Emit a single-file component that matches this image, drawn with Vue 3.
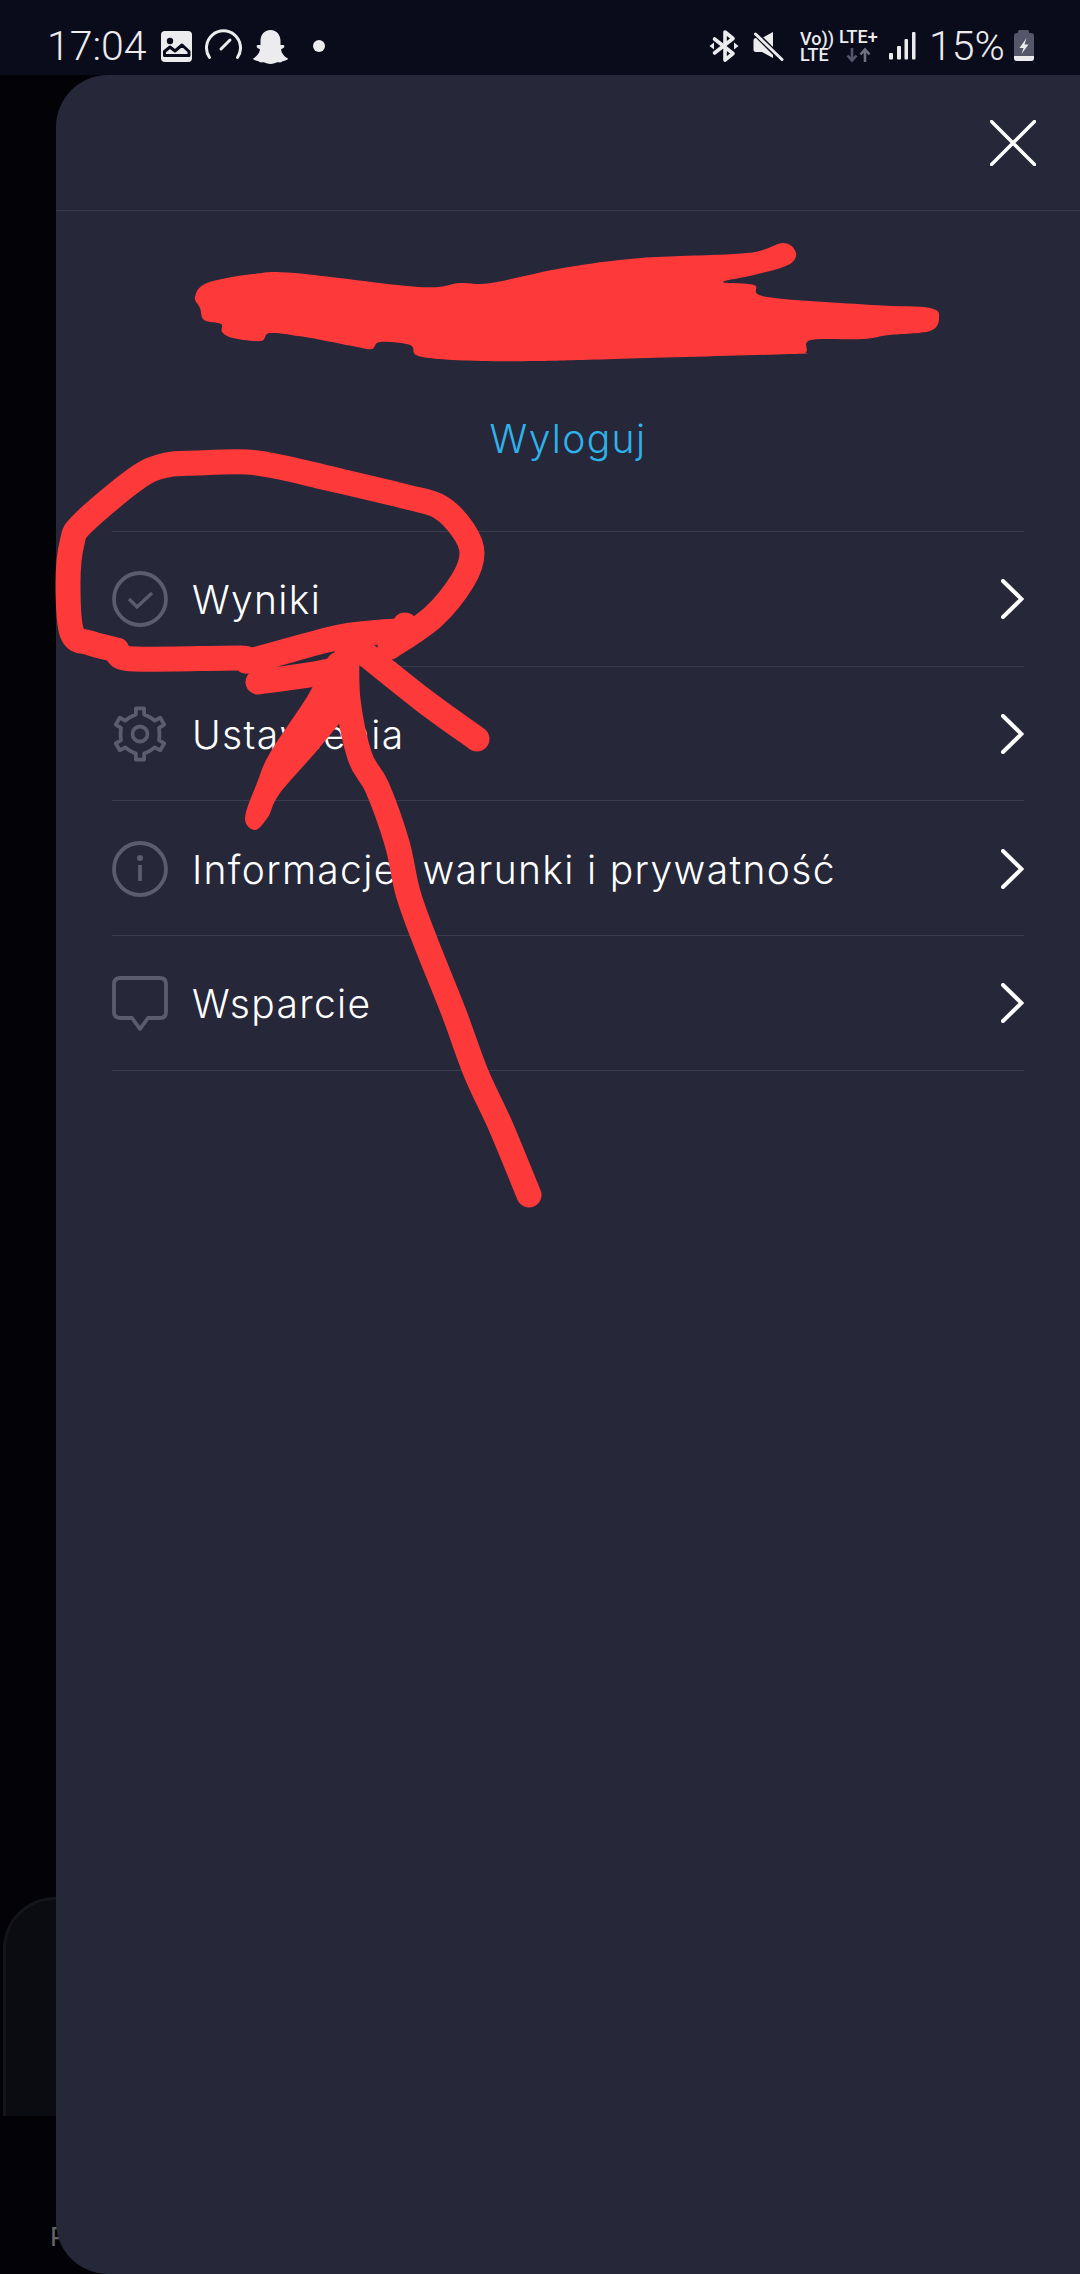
<script setup>
const rows = [
  { icon: 'check', label: 'Wyniki' },
  { icon: 'gear', label: 'Ustawienia' },
  { icon: 'info', label: 'Informacje, warunki i prywatność' },
  { icon: 'chat', label: 'Wsparcie' },
]

const gearPoints = Array.from({ length: 6 }, (_, i) => {
  const a = -90 + i * 60
  return [[a - 24, 19.5], [a - 12, 20], [a - 9, 26], [a + 9, 26], [a + 12, 20], [a + 24, 19.5]]
    .map(([deg, r]) => {
      const t = (deg * Math.PI) / 180
      return `${(28 + r * Math.cos(t)).toFixed(2)},${(28 + r * Math.sin(t)).toFixed(2)}`
    })
    .join(' ')
}).join(' ')

// Smooth a hand-drawn marker line through its sample points (Catmull-Rom).
function smooth(points, closed = false) {
  const n = points.length
  const at = (i) => (closed ? points[(i + n) % n] : points[Math.max(0, Math.min(n - 1, i))])
  let d = `M${points[0][0]} ${points[0][1]}`
  const end = closed ? n : n - 1
  for (let i = 0; i < end; i++) {
    const [p0, p1, p2, p3] = [at(i - 1), at(i), at(i + 1), at(i + 2)]
    const c1 = [p1[0] + (p2[0] - p0[0]) / 6, p1[1] + (p2[1] - p0[1]) / 6]
    const c2 = [p2[0] - (p3[0] - p1[0]) / 6, p2[1] - (p3[1] - p1[1]) / 6]
    d += ` C${c1[0].toFixed(1)} ${c1[1].toFixed(1)} ${c2[0].toFixed(1)} ${c2[1].toFixed(1)} ${p2[0]} ${p2[1]}`
  }
  return closed ? d + ' Z' : d
}

const blob = smooth([
  [195, 297], [207, 283], [253, 274], [295, 273], [419, 287], [460, 283], [491, 283], [563, 268], [641, 258],
  [747, 253], [783, 243], [796, 253], [788, 265], [754, 275], [723, 282], [754, 285], [767, 297], [873, 305],
  [930, 308], [939, 318], [930, 331], [889, 335], [863, 339], [811, 340], [806, 352], [790, 354], [615, 359],
  [537, 361], [481, 361], [439, 359], [416, 355], [410, 345], [380, 342], [372, 349], [357, 347], [305, 337],
  [270, 333], [261, 341], [233, 338], [222, 332], [221, 324], [204, 320], [200, 308],
], true)

const arrowArm = smooth([
  [333, 653], [307, 697], [270, 753], [257, 783], [245, 818], [255, 830], [268, 817], [280, 793], [320, 747], [350, 707], [357, 673],
], true)

const pens = [
  [[117, 650], [90, 643], [72, 633], [68, 583], [72, 543], [83, 523], [137, 478], [167, 465], [197, 463], [247, 462], [280, 467], [323, 477], [407, 497], [440, 507], [463, 530], [472, 553], [463, 580], [433, 617], [390, 647]],
  [[117, 653], [135, 659], [240, 658], [253, 660], [340, 637], [403, 630], [405, 625]],
  [[258, 682], [333, 670], [352, 652]],
  [[358, 648], [423, 700], [477, 739]],
  [[347, 650], [348, 700], [360, 757], [377, 787], [397, 843], [408, 893], [426, 943], [454, 1013], [476, 1073], [501, 1127], [529, 1195]],
].map((p) => smooth(p))
</script>

<template>
  <div class="screen">
    <div class="backdrop" aria-hidden="true">
      <div class="ghost-card"></div>
      <span class="ghost-letter">P</span>
    </div>

    <header class="status">
      <span class="time">17:04</span>
      <svg class="si s-image" viewBox="161 28 31 36">
        <rect x="161" y="31" width="31" height="31" rx="4" fill="#ececee" />
        <circle cx="170" cy="41" r="3.2" fill="#0a0c1c" />
        <path d="M164.500 55.500 V51.500 L170 47 L175 51 L182 45 L189 51.500 V55.500 Z" fill="#ececee" stroke="#0a0c1c" stroke-width="3" stroke-linejoin="round" />
      </svg>
      <svg class="si s-gauge" viewBox="205 28 37 36">
        <path d="M209.500 57.500 A17 17 0 1 1 237.500 57.500" fill="none" stroke="#ececee" stroke-width="3" stroke-linecap="round" />
        <path d="M221 49 L230 40" fill="none" stroke="#ececee" stroke-width="3" stroke-linecap="round" />
      </svg>
      <svg class="si s-snap" viewBox="253 28 35 36">
        <path d="M270.500 30 C264 30 260.500 35 260.500 41 V45 C259 45 257 44.500 256.500 46 C256.500 48 259 48.500 260 49.500 C259.500 53 256.500 57 253 58.500 C253.500 60.500 257 60.500 259 61.500 C260 63 262 62 264.500 62.500 C266.500 63 268 64 270.500 64 C273 64 274.500 63 276.500 62.500 C279 62 281 63 282 61.500 C284 60.500 287.500 60.500 288 58.500 C284.500 57 281.500 53 281 49.500 C282 48.500 284.500 48 284.500 46 C284 44.500 282 45 280.500 45 V41 C280.500 35 277 30 270.500 30 Z" fill="#ececee" />
      </svg>
      <span class="notif-dot"></span>

      <div class="status-right">
        <svg class="si s-bt" viewBox="709 28 31 36">
          <path d="M714.500 39 L733 53.500 L725 60 V32 L733 38.500 L714.500 53" fill="none" stroke="#ececee" stroke-width="3.600" stroke-linejoin="round" stroke-linecap="round" />
          <path d="M709.500 46 L714 42.500 V49.500 Z M738.500 46 L734 42.500 V49.500 Z" fill="#ececee" />
        </svg>
        <svg class="si s-mute" viewBox="751 28 34 36">
          <path d="M756 38 H762 L773 32 V58 L762 52 H756 Q753.500 52 753.500 49.500 V40.500 Q753.500 38 756 38 Z" fill="#ececee" />
          <path d="M752 30 L784 62" stroke="#0a0c1c" stroke-width="5.500" />
          <path d="M755.500 34 L782 59.500" stroke="#ececee" stroke-width="3" stroke-linecap="round" />
        </svg>
        <div class="net net-vo"><span>Vo))</span><span>LTE</span></div>
        <div class="net net-lte">
          <span>LTE+</span>
          <svg viewBox="0 0 26 16" class="arrows">
            <path d="M7 1 V13 M2.500 8.500 L7 13.500 L11.500 8.500" fill="none" stroke="#55566a" stroke-width="2.600" />
            <path d="M20 15 V3 M15.500 7.500 L20 2.500 L24.500 7.500" fill="none" stroke="#70717f" stroke-width="2.600" />
          </svg>
        </div>
        <svg class="si s-signal" viewBox="888 28 27 36">
          <rect x="888" y="53" width="4" height="6.500" rx="1" fill="#ececee" />
          <rect x="896" y="46" width="4" height="13.500" rx="1" fill="#ececee" />
          <rect x="903.500" y="39" width="3.500" height="20.500" rx="1" fill="#ececee" />
          <rect x="911" y="32" width="3.500" height="27.500" rx="1" fill="#ececee" />
        </svg>
        <span class="percent">15%</span>
        <svg class="si s-batt" viewBox="1013 28 21 36">
          <path d="M1017 33 V31.500 Q1017 30 1018.500 30 H1026.500 Q1028 30 1028 31.500 V33 H1030 Q1033 33 1033 36 V58 Q1033 61 1030 61 H1016 Q1013 61 1013 58 V36 Q1013 33 1016 33 Z" fill="#55566a" />
          <path d="M1013 56 H1033 V58 Q1033 61 1030 61 H1016 Q1013 61 1013 58 Z" fill="#ececee" />
          <path d="M1025.500 38 L1018.500 48 H1022.500 L1020.500 54 L1027.500 44.500 H1023.500 Z" fill="#ececee" />
        </svg>
      </div>
    </header>

    <main class="stage">
      <section class="panel">
        <div class="panel-head">
          <svg class="close" viewBox="0 0 46 46">
            <path d="M1.500 1.500 L44.500 44.500 M44.500 1.500 L1.500 44.500" fill="none" stroke="#fff" stroke-width="3.400" stroke-linecap="round" />
          </svg>
        </div>

        <div class="account">
          <span class="logout">Wyloguj</span>
        </div>

        <ul class="menu">
          <li v-for="row in rows" :key="row.label" class="row">
            <svg class="row-icon" viewBox="0 0 56 56" fill="none" stroke="#5b5c6e" stroke-width="3.800">
              <template v-if="row.icon === 'check'">
                <circle cx="28" cy="28" r="26" />
                <path d="M17 28 L25 36 L40 22" stroke-width="3.400" />
              </template>
              <template v-else-if="row.icon === 'gear'">
                <polygon :points="gearPoints" stroke-linejoin="round" />
                <circle cx="28" cy="28" r="7.500" />
              </template>
              <template v-else-if="row.icon === 'info'">
                <circle cx="28" cy="28" r="26" />
                <circle cx="28" cy="17" r="3" fill="#5b5c6e" stroke="none" />
                <path d="M28 24 V40" />
              </template>
              <template v-else>
                <path d="M8 3 H48 Q54 3 54 9 V37 Q54 43 48 43 H36 L28 54 L20 43 H8 Q2 43 2 37 V9 Q2 3 8 3 Z" stroke-linejoin="round" />
              </template>
            </svg>
            <span class="row-label">{{ row.label }}</span>
            <svg class="chevron" viewBox="0 0 23 40">
              <path d="M2 2 L20.500 20 L2 38" fill="none" stroke="#fff" stroke-width="4" stroke-linecap="round" />
            </svg>
          </li>
        </ul>
      </section>
    </main>

    <svg class="scribble" viewBox="0 0 1080 2274" aria-hidden="true">
      <path class="fill" :d="blob" />
      <path class="fill" :d="arrowArm" />
      <path v-for="(d, i) in pens" :key="i" class="pen" :d="d" />
    </svg>
  </div>
</template>

<style>
html,
body {
  margin: 0;
  background: #020207;
}
</style>

<style scoped>
.screen {
  position: relative;
  width: 1080px;
  height: 2274px;
  overflow: hidden;
  background: #020207;
  display: flex;
  flex-direction: column;
  font-family: Inter, "Liberation Sans", sans-serif;
}

.backdrop {
  position: absolute;
  inset: 0;
}

.ghost-card {
  position: absolute;
  left: 3px;
  top: 1897px;
  width: 200px;
  height: 219px;
  box-sizing: border-box;
  background: #0b0c11;
  border: 3px solid #14151a;
  border-bottom: 0;
  border-radius: 52px 0 0 0;
}

.ghost-letter {
  position: absolute;
  left: 50px;
  top: 2222px;
  font: 400 26px/30px Inter, sans-serif;
  color: #666;
}

/* status bar */
.status {
  position: relative;
  height: 75px;
  flex: none;
  box-sizing: border-box;
  padding: 28px 0 0 47px;
  display: flex;
  align-items: flex-start;
  background: #0a0c1c;
  color: #ececee;
  font-family: Roboto, sans-serif;
}

.si {
  display: block;
  height: 36px;
  flex: none;
}

.time,
.percent {
  font-weight: 300;
  font-size: 41px;
  line-height: 36px;
  white-space: nowrap;
}

.time {
  width: 97px;
}

.s-image {
  width: 31px;
  margin-left: 17px;
}

.s-gauge {
  width: 37px;
  margin-left: 13px;
}

.s-snap {
  width: 35px;
  margin-left: 11px;
}

.notif-dot {
  width: 12px;
  height: 12px;
  margin: 12px 0 0 25px;
  border-radius: 50%;
  background: #ececee;
}

.status-right {
  margin-left: 384px;
  display: flex;
  align-items: flex-start;
}

.s-bt {
  width: 31px;
}

.s-mute {
  width: 34px;
  margin-left: 11px;
}

.net {
  display: flex;
  flex-direction: column;
  font-weight: 500;
  font-size: 18px;
  line-height: 16px;
  white-space: nowrap;
}

.net-vo {
  width: 31px;
  margin-left: 15px;
  padding-top: 3px;
}

.net-lte {
  width: 40px;
  margin-left: 8px;
  padding-top: 1px;
}

.arrows {
  display: block;
  width: 26px;
  height: 16px;
  margin: 2px 0 0 6px;
}

.s-signal {
  width: 27px;
  margin-left: 10px;
}

.percent {
  width: 79px;
  margin-left: 13px;
}

.s-batt {
  width: 21px;
  margin-left: 6px;
}

/* panel */
.stage {
  flex: 1;
  position: relative;
  display: flex;
  padding-left: 56px;
}

.panel {
  flex: 1;
  background: #262739;
  border-radius: 52px 0 0 52px;
  color: #fff;
}

.panel-head {
  height: 136px;
  box-sizing: border-box;
  padding-right: 44px;
  border-bottom: 1.500px solid #3b3c4e;
  display: flex;
  align-items: center;
  justify-content: flex-end;
}

.close {
  width: 46px;
  height: 46px;
}

.account {
  height: 320px;
  box-sizing: border-box;
  padding-top: 204px;
  text-align: center;
}

.logout {
  display: block;
  font-size: 39px;
  letter-spacing: 1.350px;
  line-height: 48px;
  font-weight: 300;
  color: #2fb2ea;
}

.menu {
  list-style: none;
  margin: 0 56px;
  padding: 0;
  border-top: 1.500px solid #3b3c4e;
}

.row {
  height: 134.700px;
  box-sizing: border-box;
  border-bottom: 1.500px solid #3b3c4e;
  display: flex;
  align-items: center;
}

.row-icon {
  width: 56px;
  height: 56px;
  flex: none;
  margin-top: 1px;
}

.row-label {
  flex: 1;
  margin-left: 24px;
  padding-top: 3px;
  font-size: 39px;
  letter-spacing: 1.350px;
  font-weight: 350;
  line-height: 48px;
  white-space: nowrap;
}

.chevron {
  width: 23px;
  height: 40px;
  flex: none;
  margin-top: 1px;
}

/* red marker drawn over the screenshot */
.scribble {
  position: absolute;
  left: 0;
  top: 0;
  width: 1080px;
  height: 2274px;
  pointer-events: none;
}

.fill {
  fill: #fd3a39;
}

.pen {
  fill: none;
  stroke: #fd3a39;
  stroke-width: 25;
  stroke-linecap: round;
  stroke-linejoin: round;
}
</style>
